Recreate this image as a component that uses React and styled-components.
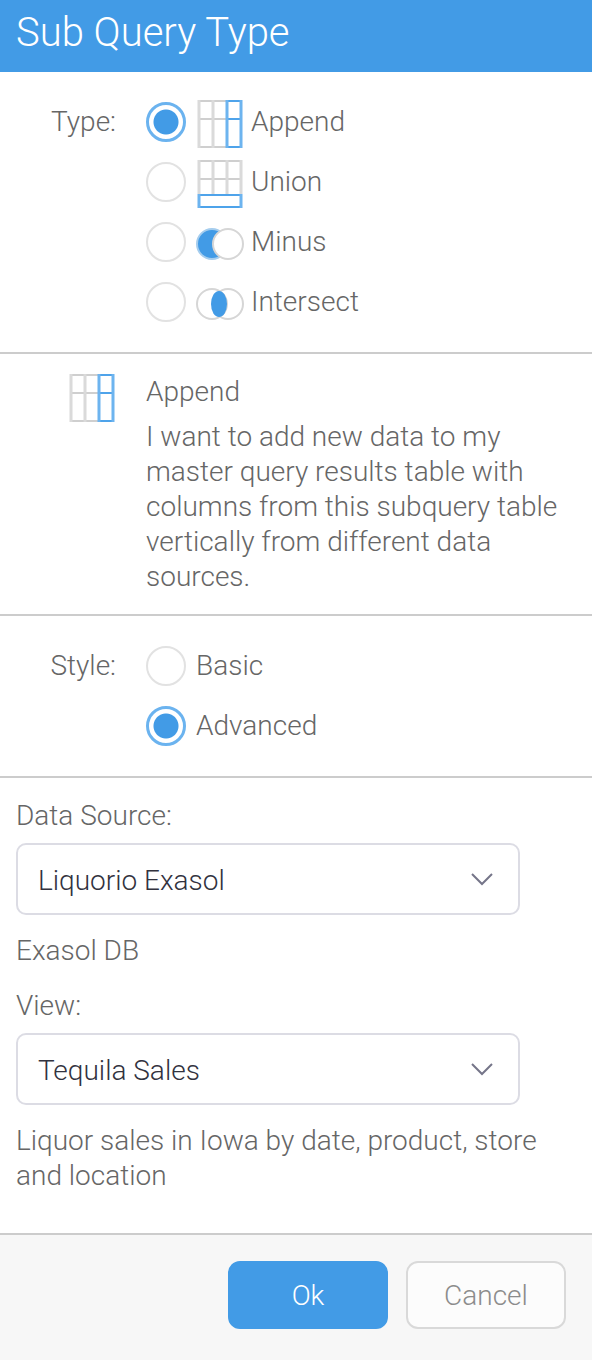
import React, { useState } from "react";
import styled, { createGlobalStyle } from "styled-components";

const types = [
  {
    name: "Append",
    text:
      "I want to add new data to my master query results table with columns from this subquery table vertically from different data sources."
  },
  {
    name: "Union",
    text:
      "I want to add new rows from this subquery table to the bottom of my master query results table."
  },
  {
    name: "Minus",
    text:
      "I want to remove the rows of this subquery table from my master query results table."
  },
  {
    name: "Intersect",
    text:
      "I want to keep only the rows found in both this subquery table and my master query results table."
  }
];

const styles = ["Basic", "Advanced"];

const TypeIcon = ({ name }) => (
  <Icon viewBox="0 0 48 48" aria-hidden="true">
    {name === "Append" && (
      <>
        <path d="M2 1H31M2 19H31M2 47H31" stroke="#cfcfcf" />
        <path d="M3 0V48M17 0V48" stroke="#dadada" strokeWidth="3" />
        <path d="M30 1H46M30 19H46M30 47H46" stroke="#4ea3ea" />
        <path d="M31 0V48M45 0V48" stroke="#6db4ef" strokeWidth="3" />
      </>
    )}
    {name === "Union" && (
      <>
        <path d="M2 1H46M2 19H46" stroke="#cfcfcf" />
        <path
          d="M3 0V34M17 0V34M31 0V34M45 0V34"
          stroke="#dadada"
          strokeWidth="3"
        />
        <path d="M2 35H46M2 47H46" stroke="#4ea3ea" />
        <path d="M3 34V48M45 34V48" stroke="#6db4ef" strokeWidth="3" />
      </>
    )}
    {name === "Minus" && (
      <>
        <circle cx="16" cy="24" r="15" fill="#429be6" stroke="#a5cdee" />
        <circle cx="32" cy="24" r="15" fill="#fff" stroke="#d6d6d6" />
      </>
    )}
    {name === "Intersect" && (
      <>
        <circle cx="16" cy="24" r="15" stroke="#d6d6d6" />
        <circle cx="32" cy="24" r="15" stroke="#d6d6d6" />
        <ellipse cx="23" cy="24" rx="8" ry="13" fill="#429be6" />
      </>
    )}
  </Icon>
);

const Dropdown = ({ id, options }) => (
  <SelectWrapper>
    <Select id={id}>
      {options.map((option) => (
        <option key={option}>{option}</option>
      ))}
    </Select>
    <Chevron viewBox="0 0 22 14" aria-hidden="true">
      <path d="M1 2L11 12L21 2" />
    </Chevron>
  </SelectWrapper>
);

const App = () => {
  const [type, setType] = useState("Append");
  const [style, setStyle] = useState("Advanced");

  const selected = types.find((t) => t.name === type);

  return (
    <Dialog onSubmit={(e) => e.preventDefault()}>
      <GlobalStyle />
      <Title>Sub Query Type</Title>

      <Section role="radiogroup" aria-labelledby="type-label">
        <GroupLabel id="type-label">Type:</GroupLabel>
        <div>
          {types.map(({ name }) => (
            <Option key={name}>
              <Radio
                name="type"
                checked={type === name}
                onChange={() => setType(name)}
              />
              <IconLabel>
                <TypeIcon name={name} />
                {name}
              </IconLabel>
            </Option>
          ))}
        </div>
      </Section>

      <Section>
        <IconColumn>
          <TypeIcon name={type} />
        </IconColumn>
        <Description>
          <Text as="h2">{selected.name}</Text>
          <Text>{selected.text}</Text>
        </Description>
      </Section>

      <Section role="radiogroup" aria-labelledby="style-label">
        <GroupLabel id="style-label">Style:</GroupLabel>
        <div>
          {styles.map((name) => (
            <Option key={name}>
              <Radio
                name="style"
                checked={style === name}
                onChange={() => setStyle(name)}
              />
              {name}
            </Option>
          ))}
        </div>
      </Section>

      <Source>
        <Field>
          <label htmlFor="source">Data Source:</label>
          <Dropdown id="source" options={["Liquorio Exasol"]} />
          <Text>Exasol DB</Text>
        </Field>
        <Field>
          <label htmlFor="view">View:</label>
          <Dropdown id="view" options={["Tequila Sales"]} />
          <Text>Liquor sales in Iowa by date, product, store and location</Text>
        </Field>
      </Source>

      <Footer>
        <Button type="submit" $primary>
          Ok
        </Button>
        <Button type="button">Cancel</Button>
      </Footer>
    </Dialog>
  );
};

export default App;

const GlobalStyle = createGlobalStyle`
  * {
    box-sizing: border-box;
  }

  body {
    margin: 0;
    background: #f7f7f7;
  }
`;

const Dialog = styled.form`
  background: #fff;
  color: #666;
  font-family: Roboto, "Liberation Sans", sans-serif;
  font-size: 28px;
  font-weight: 300;
  line-height: 35px;
`;

const Title = styled.h1`
  margin: 0;
  padding: 9px 16px 15px;
  background: #429be6;
  color: #fff;
  font-size: 40px;
  font-weight: 300;
  line-height: 48px;
`;

const Section = styled.div`
  display: grid;
  grid-template-columns: 116px 1fr;
  column-gap: 30px;
  padding: 20px 16px 20px 0;
  border-bottom: 2px solid #ccc;
`;

const GroupLabel = styled.div`
  line-height: 60px;
  text-align: right;
`;

const Option = styled.label`
  display: flex;
  align-items: center;
  height: 60px;
  gap: 10px;
  line-height: 60px;
`;

const IconLabel = styled.span`
  display: flex;
  align-items: center;
  gap: 7px;
`;

const Radio = styled.input.attrs({ type: "radio" })`
  appearance: none;
  flex: none;
  width: 40px;
  height: 40px;
  margin: 0;
  border: 2px solid #e2e2e2;
  border-radius: 50%;
  background: #fff;

  &:checked {
    border: 3px solid #6bb3ef;
    background: radial-gradient(circle, #429be6 12px, #fff 13px);
  }
`;

const Icon = styled.svg`
  flex: none;
  width: 48px;
  height: 48px;
  margin-top: 4px;
  fill: none;
  stroke-width: 2;
`;

const IconColumn = styled.div`
  display: flex;
  justify-content: flex-end;
  align-items: flex-start;

  ${Icon} {
    margin-top: 0;
  }
`;

const Description = styled.div`
  display: grid;
  gap: 10px;
`;

const Text = styled.p`
  margin: 0;
  font-size: 28px;
  font-weight: 300;
`;

const Source = styled.div`
  display: grid;
  gap: 20px;
  padding: 20px 16px 40px;
`;

const Field = styled.div`
  display: flex;
  flex-direction: column;
`;

const SelectWrapper = styled.div`
  display: grid;
  align-items: center;
  margin: 10px 56px 18px 0;
`;

const Select = styled.select`
  grid-area: 1 / 1;
  appearance: none;
  width: 100%;
  height: 72px;
  padding: 2px 60px 0 20px;
  border: 2px solid #dcdce4;
  border-radius: 10px;
  background: #fff;
  color: #32323e;
  font: inherit;
`;

const Chevron = styled.svg`
  grid-area: 1 / 1;
  justify-self: end;
  width: 22px;
  height: 14px;
  margin-right: 27px;
  fill: none;
  stroke: #757589;
  stroke-width: 2;
  pointer-events: none;
`;

const Footer = styled.div`
  display: flex;
  justify-content: flex-end;
  gap: 18px;
  padding: 26px 26px 31px;
  border-top: 2px solid #ccc;
  background: #f7f7f7;
`;

const Button = styled.button`
  width: 160px;
  height: 68px;
  padding: 0;
  border: 2px solid ${({ $primary }) => ($primary ? "#429be6" : "#d9d9d9")};
  border-radius: 12px;
  background: ${({ $primary }) => ($primary ? "#429be6" : "#fcfcfc")};
  color: ${({ $primary }) => ($primary ? "#fff" : "#8c8c8c")};
  font: inherit;
`;
